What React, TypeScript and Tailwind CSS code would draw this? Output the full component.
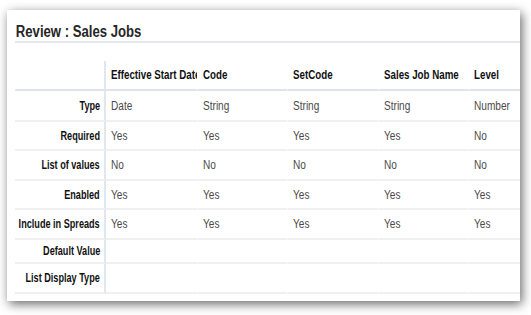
import React from "react"

// Review table data
const columns = ["Effective Start Date", "Code", "SetCode", "Sales Job Name", "Level"]

const rows: { label: string; values: string[]; h: string }[] = [
    { label: "Type", values: ["Date", "String", "String", "String", "Number"], h: "h-[31px]" },
    { label: "Required", values: ["Yes", "Yes", "Yes", "Yes", "No"], h: "h-[29px]" },
    { label: "List of values", values: ["No", "No", "No", "No", "No"], h: "h-[30px]" },
    { label: "Enabled", values: ["Yes", "Yes", "Yes", "Yes", "Yes"], h: "h-[29px]" },
    { label: "Include in Spreads", values: ["Yes", "Yes", "Yes", "Yes", "Yes"], h: "h-[30px]" },
    { label: "Default Value", values: ["", "", "", "", ""], h: "h-[24px]" },
    { label: "List Display Type", values: ["", "", "", "", ""], h: "h-[30px]" },
]

// No narrow face installed, so condense Liberation Sans horizontally
const font = "font-['Liberation_Sans',Arial,sans-serif]"

export default function App() {
    return (
        <div className={`w-[531px] h-[315px] bg-white overflow-hidden pt-[10px] pl-[7px] ${font}`}>
            <div className="w-[513px] h-[291px] bg-white shadow-[2px_3px_10px_rgba(0,0,0,0.6)] pl-[8px]">
                {/* Title */}
                <div className="h-[33px] pt-[10px] border-b-2 border-[#e1e7ec]">
                    <h1 className="inline-block origin-left scale-x-[0.82] text-[16px] leading-[18px] font-bold text-[#262626] pl-[1px] whitespace-nowrap">
                        Review : Sales Jobs
                    </h1>
                </div>

                {/* Table */}
                <div className="mt-[18px] grid grid-cols-[91px_91px_90px_91px_90px_1fr]">
                    <div className="h-[30px] border-r-2 border-b-2 border-r-[#e1e7ee] border-b-[#dde4eb]" />
                    {columns.map((col, i) => (
                        <div
                            key={col}
                            className={`h-[30px] flex items-center pl-[5px] border-b-2 border-[#dde4eb] overflow-hidden whitespace-nowrap ${i > 0 ? "border-l border-l-white" : ""}`}
                        >
                            <span className="inline-block origin-left scale-x-[0.75] text-[13px] font-bold text-[#111]">{col}</span>
                        </div>
                    ))}

                    {rows.map((row) => (
                        <React.Fragment key={row.label}>
                            <div className={`${row.h} flex items-center justify-end pr-[4px] border-r-2 border-b-2 border-r-[#e1e7ee] border-b-[#eef0f2]`}>
                                <span className="inline-block origin-right scale-x-[0.76] text-[12px] font-bold text-[#111] whitespace-nowrap">
                                    {row.label}
                                </span>
                            </div>
                            {row.values.map((v, i) => (
                                <div
                                    key={i}
                                    className={`${row.h} flex items-center pl-[5px] border-b-2 border-[#eef0f2] ${i > 0 ? "border-l border-l-white" : ""}`}
                                >
                                    <span className="inline-block origin-left scale-x-[0.84] text-[12px] text-[#4a4a4a] whitespace-nowrap">{v}</span>
                                </div>
                            ))}
                        </React.Fragment>
                    ))}
                </div>
            </div>
        </div>
    )
}
